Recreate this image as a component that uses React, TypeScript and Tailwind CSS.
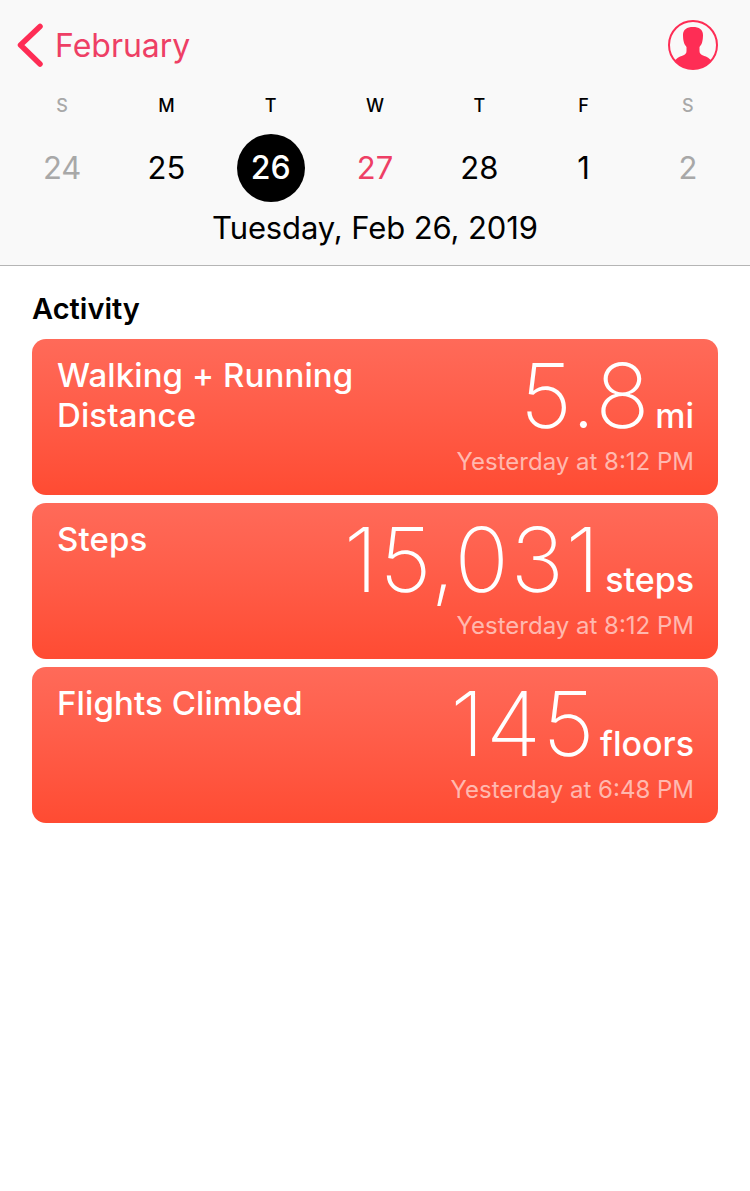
const days = [
  { label: 'S', date: '24', labelColor: 'text-[#a8a8a8]', dateColor: 'text-[#a8a8a8]' },
  { label: 'M', date: '25', labelColor: 'text-black', dateColor: 'text-black' },
  { label: 'T', date: '26', labelColor: 'text-black', dateColor: 'text-white', selected: true },
  { label: 'W', date: '27', labelColor: 'text-black', dateColor: 'text-[#ee3f65]' },
  { label: 'T', date: '28', labelColor: 'text-black', dateColor: 'text-black' },
  { label: 'F', date: '1', labelColor: 'text-black', dateColor: 'text-black' },
  { label: 'S', date: '2', labelColor: 'text-[#a8a8a8]', dateColor: 'text-[#a8a8a8]' },
]

const cards = [
  { title: ['Walking + Running', 'Distance'], value: '5.8', unit: 'mi', time: 'Yesterday at 8:12 PM' },
  { title: ['Steps'], value: '15,031', unit: 'steps', time: 'Yesterday at 8:12 PM' },
  { title: ['Flights Climbed'], value: '145', unit: 'floors', time: 'Yesterday at 6:48 PM' },
]

function ProfileIcon() {
  return (
    <svg width="50" height="50" viewBox="0 0 50 50" fill="none">
      <defs>
        <clipPath id="profile-clip">
          <circle cx="25" cy="25" r="24" />
        </clipPath>
      </defs>
      <g clipPath="url(#profile-clip)">
        <path
          fill="#fe2d55"
          d="M25 7C19 7 15 9.500 15 15C15 18 15.300 20 15.800 22C16.300 24 17.300 25.500 18.500 27V31C18.500 33 17.500 34.500 15.500 35.200C13 36 11 37 9.500 38L5 42V50H45V42L40.500 38C39 37 37 36 34.500 35.200C32.500 34.500 31.500 33 31.500 31V27C32.700 25.500 33.700 24 34.200 22C34.700 20 35 18 35 15C35 9.500 31 7 25 7Z"
        />
      </g>
      <circle cx="25" cy="25" r="24" stroke="#fe2d55" strokeWidth="2" />
    </svg>
  )
}

export default function App() {
  return (
    <div className="min-h-[1191px] bg-white font-['Inter',sans-serif]">
      <div className="h-[266px] border-b border-[#b5b5b5] bg-[#f9f9f9]">
        <div className="flex h-[90px] items-start justify-between pl-[17px] pr-[32px] pt-[20px]">
          <div className="flex items-start gap-[12px]">
            <svg className="mt-[3px]" width="26" height="44" viewBox="0 0 26 44" fill="none">
              <path d="M23 3.500 L3.500 22 L23 41" stroke="#fe2d55" strokeWidth="5.500" strokeLinecap="round" strokeLinejoin="round" />
            </svg>
            <span className="mt-[1px] text-[32px] leading-[50px] text-[#ee3f65]">February</span>
          </div>
          <ProfileIcon />
        </div>

        <div className="grid grid-cols-7 px-[10px]">
          {days.map((day, i) => (
            <div key={i} className="flex flex-col items-center">
              <span className={`text-[18px] font-medium leading-[32px] ${day.labelColor}`}>{day.label}</span>
              <span
                className={`mt-[12px] flex size-[68px] items-center justify-center rounded-full ${
                  day.selected ? 'bg-black text-[32px] font-medium' : 'text-[31px]'
                } ${day.dateColor}`}
              >
                {day.date}
              </span>
            </div>
          ))}
        </div>

        <p className="mt-[1px] text-center text-[31px] leading-[50px] tracking-[-0.1px] text-black">
          Tuesday, Feb 26, 2019
        </p>
      </div>

      <div className="px-[32px] pt-[23px]">
        <h2 className="text-[29px] font-semibold leading-[40px] text-black">Activity</h2>

        <div className="mt-[10px] flex flex-col gap-[8px]">
          {cards.map((card) => (
            <div
              key={card.value}
              className="flex h-[156px] justify-between rounded-[14px] bg-gradient-to-b from-[#ff6a59] to-[#ff4b32] pl-[25px] pr-[24px] text-white"
            >
              <div className="pt-[16px] text-[33px] font-medium leading-[40px] tracking-[0.1px]">
                {card.title.map((line) => (
                  <div key={line}>{line}</div>
                ))}
              </div>
              <div className="flex flex-col items-end">
                <div className="flex h-[104px] items-baseline gap-[4px]">
                  <span className="text-[90px] font-[250] leading-[113px] tracking-[1.500px]">{card.value}</span>
                  <span className="text-[34px] font-[550] leading-[40px]">{card.unit}</span>
                </div>
                <span className="mt-[3px] text-[24px] leading-[32px] text-white/60">{card.time}</span>
              </div>
            </div>
          ))}
        </div>
      </div>
    </div>
  )
}
